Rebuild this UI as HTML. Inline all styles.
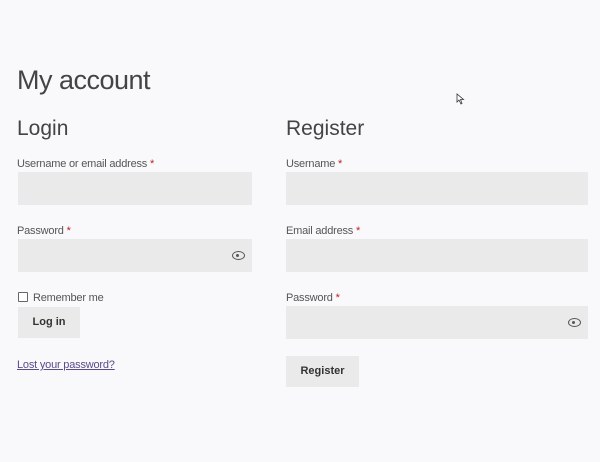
<!DOCTYPE html><html><head><style>
body{margin:0;width:600px;height:462px;background:#f9f8fb;font-family:"Liberation Sans",sans-serif;color:#333;position:relative;overflow:hidden}
.a{position:absolute}
h1,h2{margin:0;font-weight:300;position:absolute;color:#444}
h1{font-size:27px;left:17px;top:65px;letter-spacing:-0.5px}
h2{font-size:21px;top:117px}
.l{position:absolute;font-size:11px;color:#555;letter-spacing:-0.2px}
.l b{color:#b22;font-weight:normal}
.i{position:absolute;background:#ebeaeb;height:33px}
.btn{position:absolute;background:#ebeaeb;font-size:11px;font-weight:bold;color:#333;text-align:center}
.eye{position:absolute;width:13px;height:9px;border:1.8px solid #555;border-radius:50%;box-sizing:border-box}
.eye:after{content:"";position:absolute;left:3.3px;top:1.5px;width:3px;height:3px;background:#555;border-radius:50%}
</style></head><body>
<h1>My account</h1>
<h2 style="left:17px">Login</h2>
<h2 style="left:286px">Register</h2>
<div class="l" style="left:17px;top:158px">Username or email address <b>*</b></div>
<div class="i" style="left:18px;top:172px;width:234px"></div>
<div class="l" style="left:17px;top:225px">Password <b>*</b></div>
<div class="i" style="left:18px;top:239px;width:234px"></div>
<div class="eye" style="left:232px;top:251px"></div>
<div class="a" style="left:18px;top:292px;width:8px;height:8px;border:1px solid #666;border-radius:1px;background:#fff"></div>
<div class="l" style="left:33px;top:292px">Remember me</div>
<div class="btn" style="left:18px;top:307px;width:62px;height:31px;line-height:31px">Log in</div>
<div class="l" style="left:17px;top:359px;color:#5b4b8a;text-decoration:underline">Lost your password?</div>
<div class="l" style="left:286px;top:158px">Username <b>*</b></div>
<div class="i" style="left:286px;top:172px;width:302px"></div>
<div class="l" style="left:286px;top:225px">Email address <b>*</b></div>
<div class="i" style="left:286px;top:239px;width:302px"></div>
<div class="l" style="left:286px;top:292px">Password <b>*</b></div>
<div class="i" style="left:286px;top:306px;width:302px"></div>
<div class="eye" style="left:568px;top:318px"></div>
<div class="btn" style="left:286px;top:356px;width:73px;height:31px;line-height:31px">Register</div>
<svg class="a" style="left:456px;top:93px" width="9" height="12" viewBox="0 0 9 12"><path d="M1 1L1 9L3 7L5 11L6 10.5L4.5 6.5L7.5 6.5Z" fill="#fff" stroke="#333" stroke-width="0.8"/></svg>
</body></html>
